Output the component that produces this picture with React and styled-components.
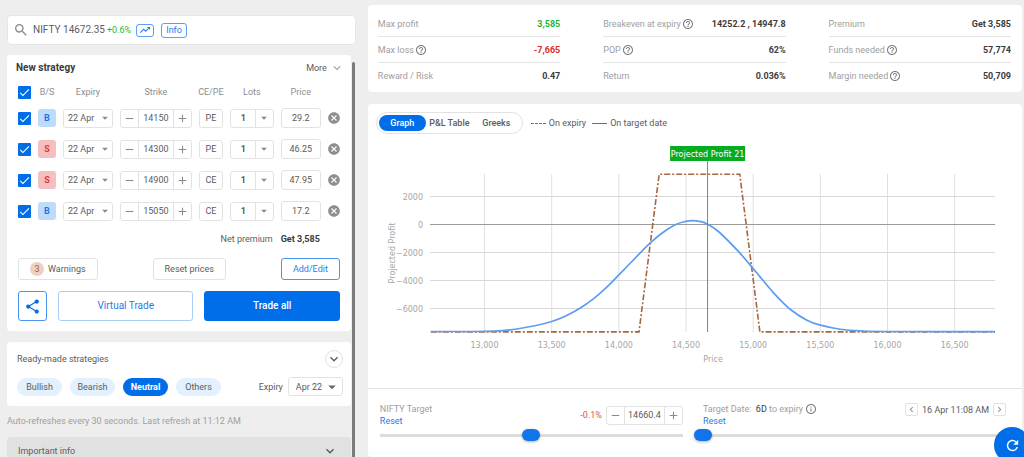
import React, { useState } from "react";
import styled, { createGlobalStyle, css } from "styled-components";
import {
  MdAdd,
  MdArrowDropDown,
  MdCancel,
  MdCheck,
  MdChevronLeft,
  MdChevronRight,
  MdExpandMore,
  MdHelpOutline,
  MdInfoOutline,
  MdRefresh,
  MdRemove,
  MdSearch,
  MdShare,
  MdTrendingUp,
} from "react-icons/md";

const colors = {
  page: "#eeeeee",
  primary: "#006ee9",
  link: "#1f7bec",
  border: "#e2e2e2",
  text: "#5c5c5c",
  dark: "#3c3c3c",
  muted: "#9e9e9e",
  green: "#1db83c",
  red: "#dc2b2b",
};

const GlobalStyle = createGlobalStyle`
  *, *::before, *::after {
    box-sizing: border-box;
  }

  body {
    margin: 0;
    background: ${colors.page};
    color: ${colors.text};
    font: 9px/12px Roboto, sans-serif;
  }

  button, input, select {
    margin: 0;
    padding: 0;
    border: 0;
    background: none;
    color: inherit;
    font: inherit;
  }

  button, select {
    cursor: pointer;
  }

  svg {
    display: block;
    flex: none;
  }
`;

const Page = styled.div`
  display: grid;
  grid-template-columns: 8fr 15fr;
  column-gap: 12px;
  height: 100vh;
  padding: 0 2px 0 7px;
  overflow: hidden;
`;

const Column = styled.div`
  display: flex;
  flex-direction: column;
  min-width: 0;
  min-height: 0;
`;

const LeftColumn = styled(Column)`
  padding-top: 15px;
`;

const RightColumn = styled(Column)`
  padding-top: 5px;
  gap: 12px;
`;

const Card = styled.section`
  flex: none;
  border-radius: 4px;
  background: #fff;
`;

/* search */

const SearchBar = styled(Card)`
  display: flex;
  align-items: center;
  height: 30px;
  margin-bottom: 10px;
  padding: 0 5px;
  border: 1px solid #e6e6e6;
  color: #8a8a8a;
`;

const Symbol = styled.span`
  margin: 0 2px 0 4px;
  color: ${colors.text};
  font-size: 10px;
`;

const Change = styled.span`
  color: ${(props) => (props.$down ? "#d9534f" : colors.green)};
`;

const TagButton = styled.button`
  display: flex;
  align-items: center;
  justify-content: center;
  height: ${(props) => (props.$small ? 13 : 15)}px;
  margin-left: ${(props) => (props.$small ? 5 : 7)}px;
  padding: 0 ${(props) => (props.$small ? 2 : 4)}px;
  border: 1px solid #5b9ff2;
  border-radius: 3px;
  color: ${colors.link};
`;

/* left panel */

const ScrollArea = styled.div`
  display: flex;
  flex: 1;
  min-height: 0;
`;

const Panels = styled.div`
  flex: 1;
  min-width: 0;
`;

const ScrollThumb = styled.div`
  flex: none;
  width: 3px;
  margin: 7px 1px 0 1px;
  border-radius: 2px 2px 0 0;
  background: #7c7c7c;
`;

const StrategyCard = styled(Card)`
  padding: 6px 11px 10px;
`;

const StrategyHead = styled.div`
  display: flex;
  align-items: center;
  justify-content: space-between;
  height: 14px;
  margin: 0 -4px 10px -2px;
`;

const Title = styled.h2`
  margin: 0;
  color: ${colors.dark};
  font-size: 10px;
  font-weight: 700;
`;

const MoreButton = styled.button`
  display: flex;
  align-items: center;
  gap: 3px;

  svg {
    color: ${colors.muted};
  }
`;

const LegGrid = styled.div`
  display: grid;
  grid-template-columns: 13px 18px 50px 72px 24px 44px 40px 13px;
  justify-content: space-between;
  align-items: center;
  margin-right: -1px;
`;

const LegHead = styled(LegGrid)`
  height: 14px;
  margin-bottom: 9px;
  color: #8d8d8d;

  span {
    justify-self: center;
    white-space: nowrap;
  }
`;

const LegRow = styled(LegGrid)`
  height: 20px;
  margin-bottom: 11px;
`;

const Tick = styled.span`
  position: relative;
  display: block;
  width: 13px;
  height: 13px;

  input {
    display: block;
    width: 13px;
    height: 13px;
    border-radius: 1px;
    background: ${colors.primary};
    appearance: none;

    &:not(:checked) {
      border: 1px solid ${colors.muted};
      background: #fff;
    }
  }

  svg {
    position: absolute;
    top: 0;
    left: 0;
    color: #fff;
    pointer-events: none;
  }
`;

const SideBadge = styled.button`
  height: 18px;
  border-radius: 3px;
  background: ${(props) => (props.$sell ? "#f3bfbf" : "#bfdbfb")};
  color: ${(props) => (props.$sell ? "#dc3c3c" : "#1a75e8")};
  font-weight: 700;
`;

const box = css`
  height: 19px;
  border: 1px solid ${colors.border};
  border-radius: 3px;
  background: #fff;
`;

const SelectBox = styled.span`
  ${box}
  position: relative;
  display: block;
  width: ${(props) => props.$width || "auto"};

  select {
    display: block;
    width: 100%;
    height: 100%;
    padding-left: ${(props) => (props.$split ? 10 : props.$wide ? 7 : 4)}px;
    outline: 0;
    font-weight: ${(props) => (props.$split ? 700 : 400)};
    appearance: none;
  }

  span {
    position: absolute;
    top: 0;
    right: 0;
    bottom: 0;
    display: flex;
    align-items: center;
    justify-content: center;
    width: ${(props) => (props.$wide ? 20 : props.$split ? 18 : 14)}px;
    border-left: ${(props) => (props.$split ? `1px solid ${colors.border}` : 0)};
    color: ${(props) => (props.$wide ? "#666" : "#8a8a8a")};
    pointer-events: none;
  }
`;

const StepperBox = styled.span`
  ${box}
  display: grid;
  grid-template-columns: 17px 1fr 17px;
  width: ${(props) => props.$width || "auto"};

  button {
    display: flex;
    align-items: center;
    justify-content: center;
    color: #8a8a8a;
  }

  input {
    width: 100%;
    min-width: 0;
    border: solid ${colors.border};
    border-width: 0 1px;
    text-align: center;
  }
`;

const TypeButton = styled.button`
  ${box}
`;

const PriceInput = styled.input`
  ${box}
  width: 100%;
  height: 20px;
  text-align: center;
`;

const RemoveButton = styled.button`
  display: flex;
  justify-content: flex-end;
  color: #8e8e8e;
`;

const NetPremium = styled.div`
  display: flex;
  justify-content: flex-end;
  gap: 8px;
  margin: 12px 20px 13px 0;

  strong {
    color: ${colors.dark};
  }
`;

const ButtonRow = styled.div`
  display: flex;
  justify-content: space-between;
  gap: 11px;
`;

const SmallButton = styled.button`
  display: flex;
  align-items: center;
  justify-content: center;
  gap: 4px;
  height: 22px;
  padding: 0 11px;
  border: 1px solid ${(props) => (props.$outlined ? "#4a94f2" : colors.border)};
  border-radius: 3px;
  color: ${(props) => (props.$outlined ? colors.link : colors.text)};
`;

const Count = styled.span`
  width: 14px;
  border-radius: 7px;
  background: #efcfc0;
  color: #8b6b5c;
  line-height: 14px;
`;

const TradeRow = styled(ButtonRow)`
  margin-top: 11px;
`;

const ShareButton = styled.button`
  display: flex;
  align-items: center;
  justify-content: center;
  width: 29px;
  height: 30px;
  border: 1px solid #4a94f2;
  border-radius: 3px;
  color: ${colors.primary};
`;

const TradeButton = styled.button`
  flex: 1;
  height: 30px;
  border: 1px solid ${(props) => (props.$filled ? colors.primary : "#a9cff9")};
  border-radius: 3px;
  background: ${(props) => (props.$filled ? colors.primary : "#fff")};
  color: ${(props) => (props.$filled ? "#fff" : colors.link)};
  font-size: 10px;
  font-weight: ${(props) => (props.$filled ? 500 : 400)};
`;

const ReadyCard = styled(Card)`
  margin-top: 11px;
  padding: 8px 8px 10px 10px;
`;

const ReadyHead = styled.div`
  display: flex;
  align-items: center;
  justify-content: space-between;
  margin-bottom: 9px;
`;

const RoundButton = styled.button`
  display: flex;
  align-items: center;
  justify-content: center;
  width: 18px;
  height: 18px;
  border: 1px solid ${colors.border};
  border-radius: 50%;
`;

const Chips = styled.div`
  display: flex;
  align-items: center;
  gap: 8px;

  label {
    margin: 0 -3px 0 auto;
  }
`;

const Chip = styled.button`
  width: 45px;
  height: 18px;
  border-radius: 9px;
  background: ${(props) => (props.$active ? colors.primary : "#e3f0fd")};
  color: ${(props) => (props.$active ? "#fff" : colors.text)};
  font-weight: ${(props) => (props.$active ? 700 : 400)};
`;

const RefreshNote = styled.p`
  margin: 9px 0 10px;
  color: ${colors.muted};
`;

const InfoBar = styled.button`
  display: flex;
  align-items: center;
  justify-content: space-between;
  width: 100%;
  height: 28px;
  padding: 0 13px 0 11px;
  border-radius: 4px 4px 0 0;
  background: #e1e1e1;
`;

/* stats */

const StatsCard = styled(Card)`
  display: grid;
  grid-template-columns: repeat(3, 1fr);
  column-gap: 43px;
  padding: 6px 11px 3px 10px;
`;

const Stat = styled.div`
  display: flex;
  align-items: center;
  justify-content: space-between;
  height: 26px;
  border-bottom: 1px solid ${(props) => (props.$last ? "transparent" : "#e6e6e6")};
  color: ${colors.muted};

  span {
    display: flex;
    align-items: center;
    gap: 1px;
  }

  svg {
    color: #7a7a7a;
  }

  strong {
    color: ${(props) => props.$color || colors.dark};
  }
`;

/* chart */

const ChartCard = styled(Card)`
  flex: 1;
`;

const ChartHead = styled.div`
  display: flex;
  align-items: center;
  gap: 6px;
  padding: 8px 8px 4px;
`;

const Tabs = styled.div`
  display: flex;
  align-items: center;
  height: 22px;
  margin-right: 2px;
  padding: 0 2px;
  border: 1px solid ${colors.border};
  border-radius: 11px;
`;

const Tab = styled.button`
  width: 47px;
  height: 16px;
  border-radius: 8px;
  background: ${(props) => (props.$active ? colors.primary : "transparent")};
  color: ${(props) => (props.$active ? "#fff" : colors.text)};
  font-weight: 500;
  white-space: nowrap;
`;

const Legend = styled.span`
  display: flex;
  align-items: center;
  gap: 3px;

  &::before {
    width: 15px;
    border-top: ${(props) =>
      props.$dashed ? "1px dashed #a0653a" : "1px solid #2f76dd"};
    content: "";
  }
`;

const ChartSvg = styled.svg`
  width: 100%;
  height: auto;
  font-family: "DejaVu Sans", Verdana, sans-serif;
  font-size: 8px;

  text {
    fill: #a6a6a6;
  }
`;

const Targets = styled.div`
  display: grid;
  grid-template-columns: 1fr 1fr;
  column-gap: 20px;
  padding: 14px 16px 0 12px;
  border-top: 1px solid #e2e2e2;
`;

const TargetHead = styled.div`
  display: flex;
  align-items: ${(props) => (props.$top ? "flex-start" : "center")};
  justify-content: space-between;
  color: ${colors.muted};
`;

const TargetLabel = styled.label`
  display: flex;
  align-items: center;
  gap: 2px;

  b {
    color: ${colors.dark};
    font-weight: 400;
  }

  svg {
    color: #7a7a7a;
  }
`;

const ResetLink = styled.a`
  color: ${colors.link};
  text-decoration: none;
`;

const Controls = styled.div`
  display: flex;
  align-items: center;
  gap: 4px;
  color: ${colors.text};
`;

const ArrowButton = styled.button`
  display: flex;
  align-items: center;
  justify-content: center;
  width: 13px;
  height: 13px;
  border: 1px solid ${colors.border};
  border-radius: 2px;
  color: #8a8a8a;
`;

/* the thumb may hang half its width over either end of the track */
const Slider = styled.input`
  display: block;
  width: calc(100% + 18px);
  height: 12px;
  margin: 2px -9px 0;
  background: linear-gradient(#dcdcdc, #dcdcdc) center / calc(100% - 18px) 3px no-repeat;
  appearance: none;

  &::-webkit-slider-thumb {
    width: 18px;
    height: 12px;
    border-radius: 6px;
    background: #1274ea;
    box-shadow: 0 1px 3px rgba(0, 0, 0, 0.3);
    appearance: none;
  }
`;

const RefreshButton = styled.button`
  position: fixed;
  right: -6px;
  bottom: -6px;
  display: flex;
  align-items: center;
  justify-content: center;
  width: 36px;
  height: 36px;
  border-radius: 50%;
  background: ${colors.primary};
  color: #fff;
`;

const LEGS = [
  { side: "B", strike: "14150", type: "PE", price: "29.2" },
  { side: "S", strike: "14300", type: "PE", price: "46.25" },
  { side: "S", strike: "14900", type: "CE", price: "47.95" },
  { side: "B", strike: "15050", type: "CE", price: "17.2" },
];

const STATS = [
  { label: "Max profit", value: "3,585", color: colors.green },
  { label: "Breakeven at expiry", value: "14252.2 , 14947.8", help: true },
  { label: "Premium", value: "Get 3,585" },
  { label: "Max loss", value: "-7,665", help: true, color: colors.red },
  { label: "POP", value: "62%", help: true },
  { label: "Funds needed", value: "57,774", help: true },
  { label: "Reward / Risk", value: "0.47" },
  { label: "Return", value: "0.036%" },
  { label: "Margin needed", value: "50,709", help: true },
];

const EXPIRY_LINE = [
  [12600, -7665],
  [14150, -7665],
  [14300, 3585],
  [14900, 3585],
  [15050, -7665],
  [16800, -7665],
];

const TARGET_LINE = [
  [12600, -7640],
  [12800, -7640],
  [13000, -7630],
  [13190, -7520],
  [13375, -7230],
  [13500, -6930],
  [13600, -6550],
  [13710, -5980],
  [13810, -5310],
  [13900, -4560],
  [14000, -3600],
  [14150, -2120],
  [14230, -1340],
  [14320, -620],
  [14420, -20],
  [14490, 210],
  [14550, 285],
  [14610, 210],
  [14660, 21],
  [14750, -570],
  [14900, -2030],
  [15000, -3150],
  [15050, -3720],
  [15150, -4860],
  [15275, -6050],
  [15400, -6830],
  [15500, -7190],
  [15650, -7480],
  [15800, -7600],
  [16000, -7640],
  [16800, -7650],
];

const xAt = (price) => 116.5 + (price - 13000) * 0.1343;
const yAt = (profit) => 86.5 - profit * 0.014;

const toPoints = (data) => data.map(([x, y]) => [xAt(x), yAt(y)]);

const linePath = (data) => `M${toPoints(data).map((p) => p.join(",")).join("L")}`;

// Catmull-Rom through every sample
const smoothPath = (data) => {
  const pts = toPoints(data);
  return pts.slice(1).reduce((path, p2, i) => {
    const p1 = pts[i];
    const p0 = pts[i - 1] || p1;
    const p3 = pts[i + 2] || p2;
    const c1 = [p1[0] + (p2[0] - p0[0]) / 6, p1[1] + (p2[1] - p0[1]) / 6];
    const c2 = [p2[0] - (p3[0] - p1[0]) / 6, p2[1] - (p3[1] - p1[1]) / 6];
    return `${path}C${c1} ${c2} ${p2}`;
  }, `M${pts[0]}`);
};

const Chart = () => (
  <ChartSvg viewBox="0 0 654 250" role="img" aria-label="Projected profit by price">
    {[13000, 13500, 14000, 14500, 15000, 15500, 16000, 16500].map((price) => (
      <g key={price}>
        <line x1={xAt(price)} x2={xAt(price)} y1="36" y2="194" stroke="#e0e0e0" />
        <text x={xAt(price)} y="210" textAnchor="middle">
          {price.toLocaleString("en-US")}
        </text>
      </g>
    ))}
    {[2000, 0, -2000, -4000, -6000].map((profit) => (
      <g key={profit}>
        <line
          x1="62"
          x2="627"
          y1={yAt(profit)}
          y2={yAt(profit)}
          stroke={profit === 0 ? "#9b9b9b" : "#d8d8d8"}
        />
        <text x="55" y={yAt(profit) + 3} textAnchor="end">
          {String(profit).replace("-", "−")}
        </text>
      </g>
    ))}
    <path
      d={linePath(EXPIRY_LINE)}
      fill="none"
      stroke="#a5673f"
      strokeWidth="1.6"
      strokeDasharray="6 2 2 2"
    />
    <path d={smoothPath(TARGET_LINE)} fill="none" stroke="#5c9df2" strokeWidth="1.7" />
    <line x1="339.5" x2="339.5" y1="23" y2="194" stroke="#36b04e" />
    <rect x="302" y="8" width="75" height="15" fill="#05ac22" />
    <text x="339.5" y="19" textAnchor="middle" style={{ fill: "#fff" }}>
      Projected Profit 21
    </text>
    <text x="345" y="224" textAnchor="middle">
      Price
    </text>
    <text transform="translate(27 115) rotate(-90)" textAnchor="middle">
      Projected Profit
    </text>
  </ChartSvg>
);

const Checkbox = ({ label }) => (
  <Tick>
    <input type="checkbox" defaultChecked aria-label={label} />
    <MdCheck size={13} />
  </Tick>
);

const Dropdown = ({ id, label, options, ...rest }) => (
  <SelectBox {...rest}>
    <select id={id} aria-label={label}>
      {options.map((option) => (
        <option key={option}>{option}</option>
      ))}
    </select>
    <span>
      <MdArrowDropDown size={rest.$wide ? 18 : 14} />
    </span>
  </SelectBox>
);

const Stepper = ({ id, label, value, ...rest }) => (
  <StepperBox {...rest}>
    <button type="button" aria-label={`Decrease ${label}`}>
      <MdRemove size={13} />
    </button>
    <input id={id} type="text" defaultValue={value} aria-label={label} />
    <button type="button" aria-label={`Increase ${label}`}>
      <MdAdd size={13} />
    </button>
  </StepperBox>
);

const Leg = ({ leg }) => (
  <LegRow>
    <Checkbox label={`Include ${leg.strike} ${leg.type}`} />
    <SideBadge type="button" $sell={leg.side === "S"}>
      {leg.side}
    </SideBadge>
    <Dropdown label="Expiry" options={["22 Apr", "29 Apr"]} />
    <Stepper label="strike" value={leg.strike} />
    <TypeButton type="button">{leg.type}</TypeButton>
    <Dropdown label="Lots" options={["1", "2", "3"]} $split />
    <PriceInput type="text" defaultValue={leg.price} aria-label="Price" />
    <RemoveButton type="button" aria-label="Remove leg">
      <MdCancel size={14} />
    </RemoveButton>
  </LegRow>
);

const App = () => {
  const [outlook, setOutlook] = useState("Neutral");
  const [tab, setTab] = useState("Graph");

  return (
    <Page>
      <GlobalStyle />

      <LeftColumn>
        <SearchBar>
          <MdSearch size={16} />
          <Symbol>NIFTY 14672.35</Symbol>
          <Change>+0.6%</Change>
          <TagButton type="button" $small aria-label="Open chart">
            <MdTrendingUp size={12} />
          </TagButton>
          <TagButton type="button">Info</TagButton>
        </SearchBar>

        <ScrollArea>
          <Panels>
            <StrategyCard>
              <StrategyHead>
                <Title>New strategy</Title>
                <MoreButton type="button">
                  More
                  <MdExpandMore size={14} />
                </MoreButton>
              </StrategyHead>

              <LegHead>
                <Checkbox label="Select all" />
                <span>B/S</span>
                <span>Expiry</span>
                <span>Strike</span>
                <span>CE/PE</span>
                <span>Lots</span>
                <span>Price</span>
              </LegHead>

              {LEGS.map((leg) => (
                <Leg key={leg.strike} leg={leg} />
              ))}

              <NetPremium>
                Net premium <strong>Get 3,585</strong>
              </NetPremium>

              <ButtonRow>
                <SmallButton type="button">
                  <Count>3</Count>
                  Warnings
                </SmallButton>
                <SmallButton type="button">Reset prices</SmallButton>
                <SmallButton type="button" $outlined>
                  Add/Edit
                </SmallButton>
              </ButtonRow>

              <TradeRow>
                <ShareButton type="button" aria-label="Share">
                  <MdShare size={17} />
                </ShareButton>
                <TradeButton type="button">Virtual Trade</TradeButton>
                <TradeButton type="button" $filled>
                  Trade all
                </TradeButton>
              </TradeRow>
            </StrategyCard>

            <ReadyCard>
              <ReadyHead>
                Ready-made strategies
                <RoundButton type="button" aria-label="Expand">
                  <MdExpandMore size={16} />
                </RoundButton>
              </ReadyHead>
              <Chips>
                {["Bullish", "Bearish", "Neutral", "Others"].map((name) => (
                  <Chip
                    key={name}
                    type="button"
                    $active={name === outlook}
                    onClick={() => setOutlook(name)}
                  >
                    {name}
                  </Chip>
                ))}
                <label htmlFor="ready-expiry">Expiry</label>
                <Dropdown id="ready-expiry" options={["Apr 22", "Apr 29"]} $wide $width="55px" />
              </Chips>
            </ReadyCard>

            <RefreshNote>
              Auto-refreshes every 30 seconds. Last refresh at 11:12 AM
            </RefreshNote>

            <InfoBar type="button">
              Important info
              <MdExpandMore size={16} />
            </InfoBar>
          </Panels>
          <ScrollThumb />
        </ScrollArea>
      </LeftColumn>

      <RightColumn>
        <StatsCard>
          {STATS.map(({ label, value, help, color }, i) => (
            <Stat key={label} $color={color} $last={i > 5}>
              <span>
                {label}
                {help && <MdHelpOutline size={12} />}
              </span>
              <strong>{value}</strong>
            </Stat>
          ))}
        </StatsCard>

        <ChartCard>
          <ChartHead>
            <Tabs>
              {["Graph", "P&L Table", "Greeks"].map((name) => (
                <Tab
                  key={name}
                  type="button"
                  $active={name === tab}
                  onClick={() => setTab(name)}
                >
                  {name}
                </Tab>
              ))}
            </Tabs>
            <Legend $dashed>On expiry</Legend>
            <Legend>On target date</Legend>
          </ChartHead>

          <Chart />

          <Targets>
            <div>
              <TargetHead>
                <div>
                  <TargetLabel htmlFor="target-price">NIFTY Target</TargetLabel>
                  <ResetLink href="#reset-price">Reset</ResetLink>
                </div>
                <Controls>
                  <Change $down>-0.1%</Change>
                  <Stepper id="target-price" label="target" value="14660.4" $width="77px" />
                </Controls>
              </TargetHead>
              <Slider type="range" defaultValue="50" aria-label="NIFTY target" />
            </div>
            <div>
              <TargetHead $top>
                <div>
                  <TargetLabel htmlFor="target-date">
                    <span>
                      Target Date: &nbsp;<b>6D</b> to expiry
                    </span>
                    <MdInfoOutline size={12} />
                  </TargetLabel>
                  <ResetLink href="#reset-date">Reset</ResetLink>
                </div>
                <Controls>
                  <ArrowButton type="button" aria-label="Earlier">
                    <MdChevronLeft size={11} />
                  </ArrowButton>
                  16 Apr 11:08 AM
                  <ArrowButton type="button" aria-label="Later">
                    <MdChevronRight size={11} />
                  </ArrowButton>
                </Controls>
              </TargetHead>
              <Slider id="target-date" type="range" defaultValue="0" />
            </div>
          </Targets>
        </ChartCard>
      </RightColumn>

      <RefreshButton type="button" aria-label="Refresh">
        <MdRefresh size={17} />
      </RefreshButton>
    </Page>
  );
};

export default App;
